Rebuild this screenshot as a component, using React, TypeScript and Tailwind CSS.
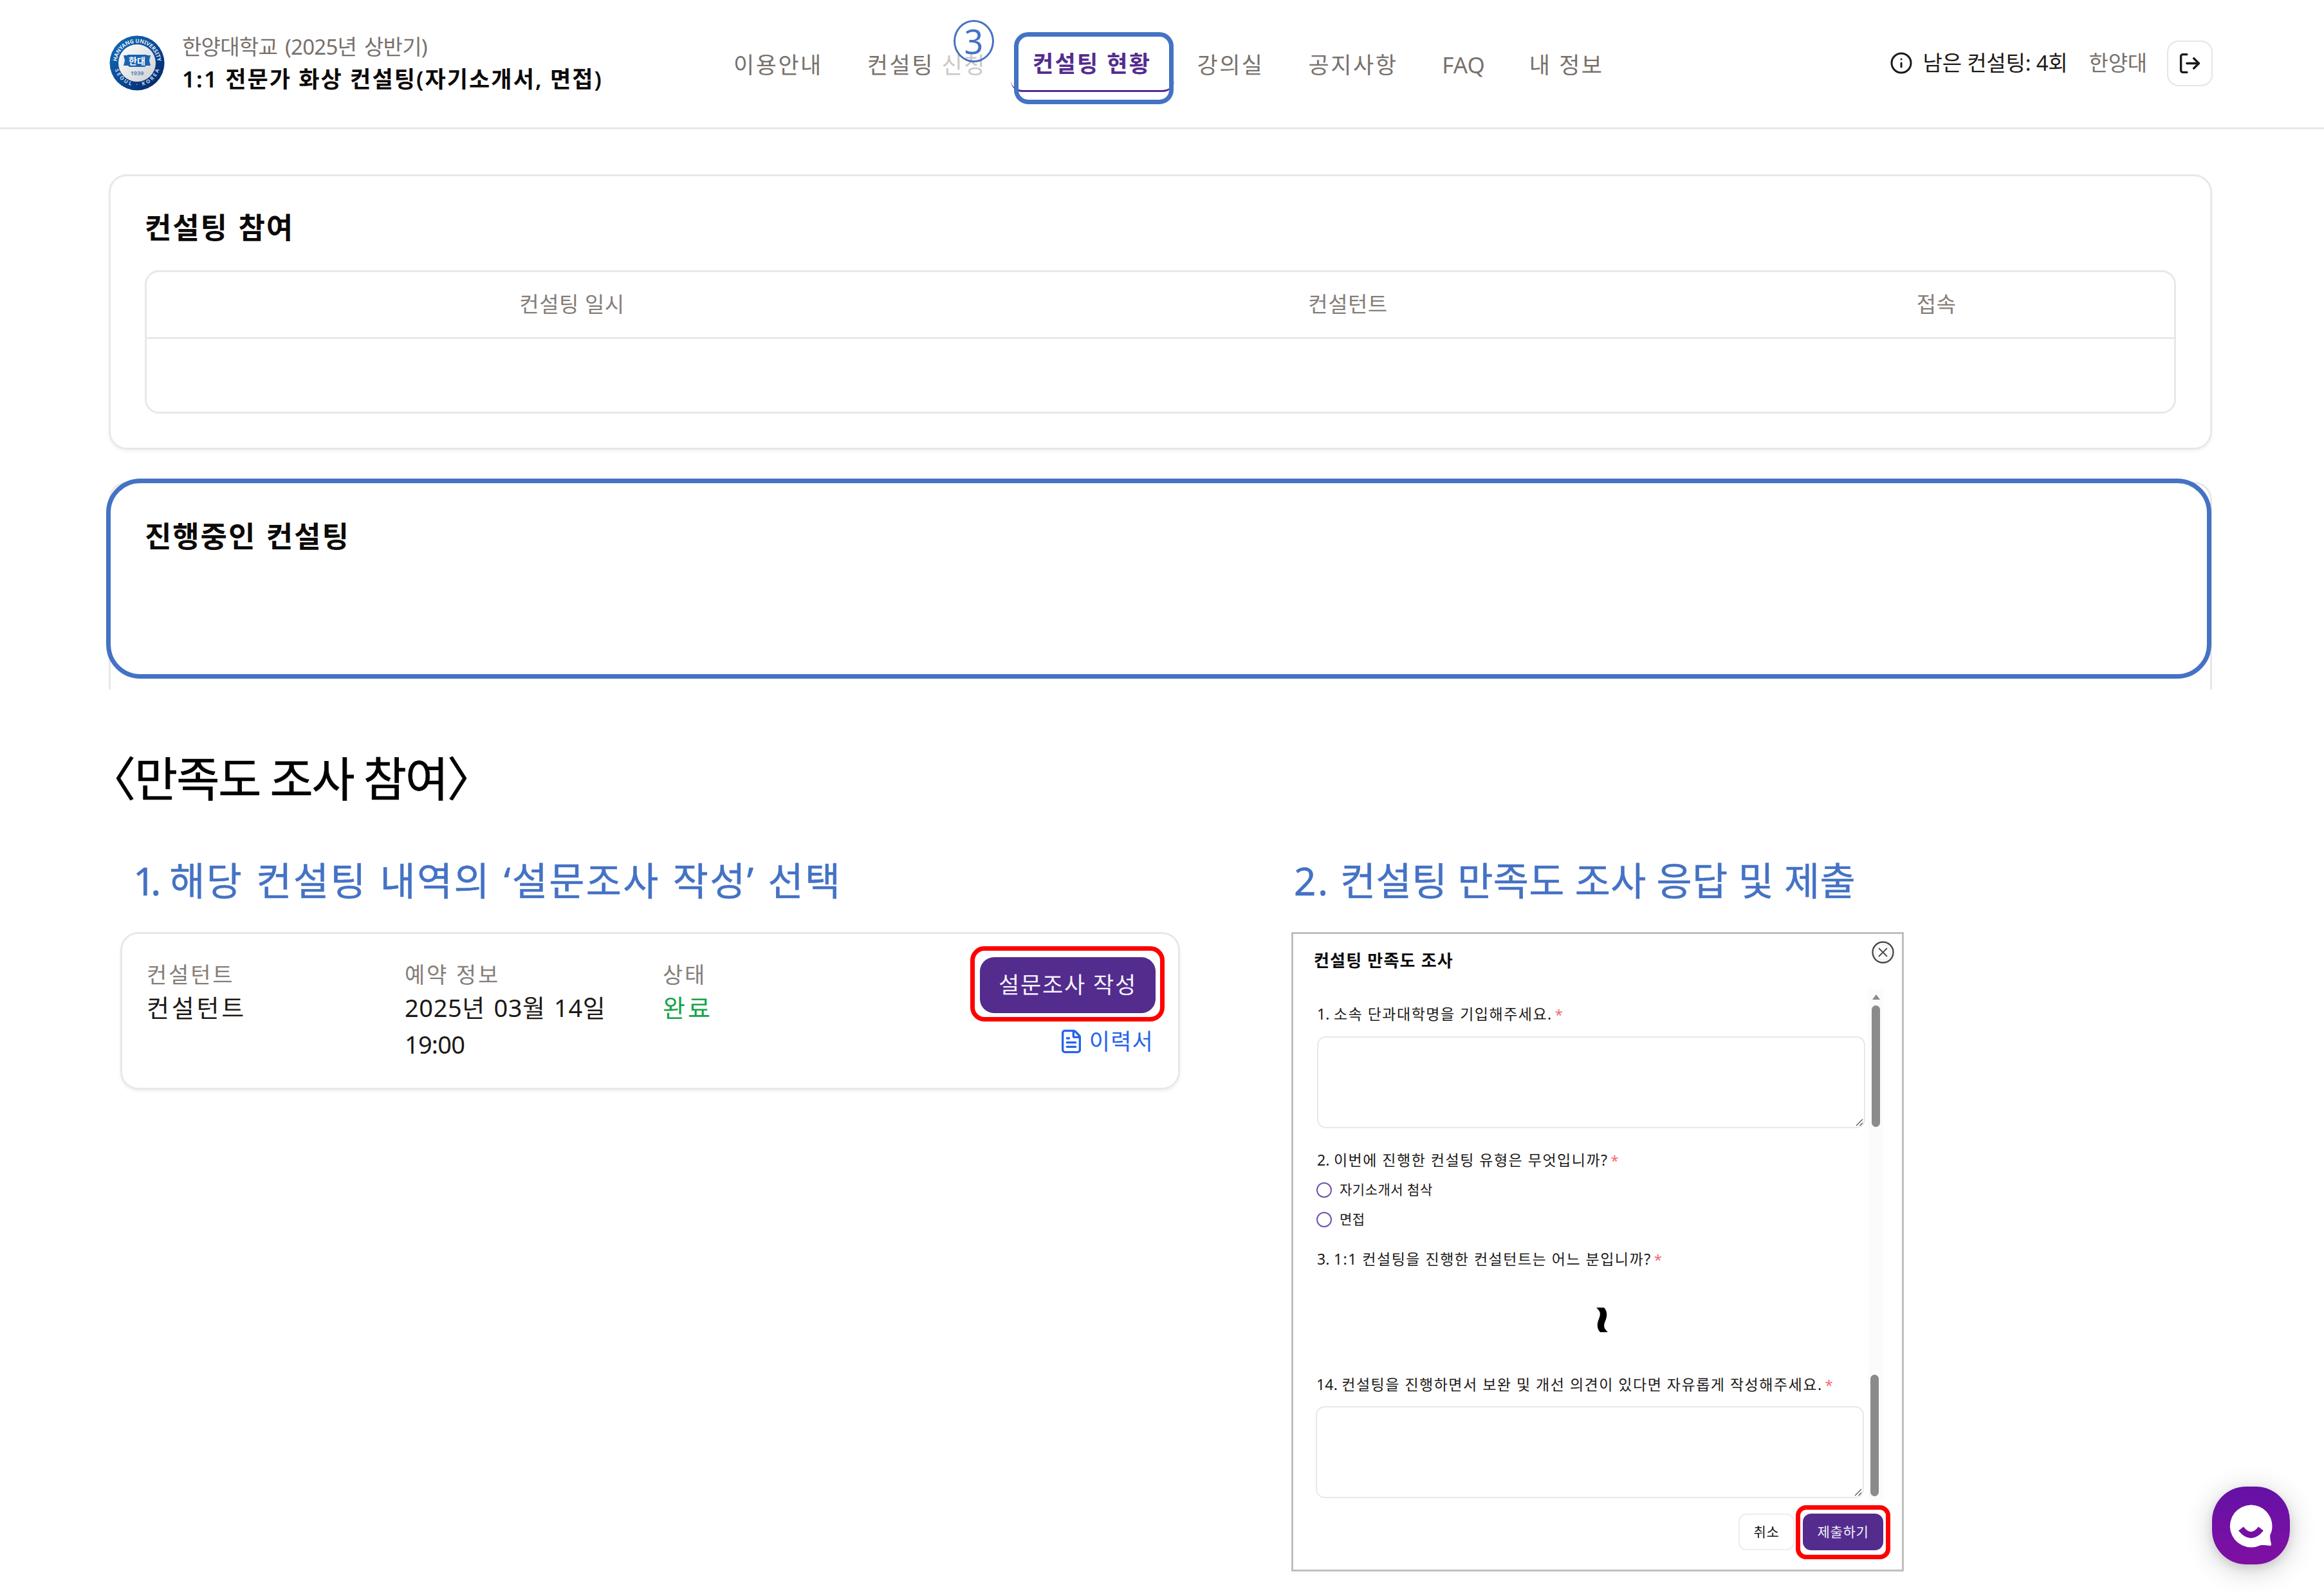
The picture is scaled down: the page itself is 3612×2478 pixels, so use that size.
import React from "react";
import { FileText, Info, LogOut } from "lucide-react";

function SchoolSeal() {
  return (
    <svg className="h-[86px] w-[86px] shrink-0" viewBox="0 0 86 86">
      <defs>
        <linearGradient id="ring" x1="0" y1="0" x2="1" y2="1">
          <stop offset="0" stopColor="#1470b8" />
          <stop offset="0.5" stopColor="#0a4a98" />
          <stop offset="1" stopColor="#04215e" />
        </linearGradient>
        <linearGradient id="face" x1="0" y1="0" x2="1" y2="1">
          <stop offset="0" stopColor="#ffffff" />
          <stop offset="1" stopColor="#cfd0d2" />
        </linearGradient>
        <path id="arcTop" d="M 11.5 43 A 31.5 31.5 0 0 1 74.5 43" />
        <path id="arcBottom" d="M 7 43 A 36 36 0 0 0 79 43" />
      </defs>
      <circle cx="43" cy="43" r="42.5" fill="url(#ring)" />
      <circle cx="43" cy="43" r="29" fill="url(#face)" />
      <text fontSize="8.5" fontWeight="700" fill="#e8eef6" fontFamily="Noto Sans" textAnchor="middle">
        <textPath href="#arcTop" startOffset="50%" textLength="94">HANYANG UNIVERSITY</textPath>
      </text>
      <text fontSize="8" fontWeight="700" fill="#c9d6ea" fontFamily="Noto Sans" textAnchor="middle">
        <textPath href="#arcBottom" startOffset="50%" textLength="92">SEOUL · KOREA</textPath>
      </text>
      <path d="M22 31h6v-1h30v1h6l-2 8 2 8h-7l-2 2H31l-2-2h-7l2-8z" fill="#1a63b0" />
      <text x="43" y="44.5" fontSize="14" fontWeight="700" fill="#ffffff" textAnchor="middle" fontFamily="Noto Sans CJK KR">
        한대
      </text>
      <text x="43" y="62" fontSize="9" fontWeight="700" fill="#5b86bd" textAnchor="middle" fontFamily="Noto Sans">
        1939
      </text>
    </svg>
  );
}

function Header() {
  return (
    <header className="flex h-[201px] border-b-[3px] border-[#e8e8e7] pl-[170px] pr-[173px]">
      <div className="flex w-[970px] items-center gap-[27px] pb-[2px]">
        <SchoolSeal />
        <div>
          <p className="text-[33px] leading-[50px] tracking-[-0.75px] text-[#78716c] [word-spacing:4px]">
            한양대학교 (2025년 상반기)
          </p>
          <p className="text-[35px] font-semibold leading-[50px] tracking-[2.1px] text-[#0c0a09]">
            1:1 전문가 화상 컨설팅(자기소개서, 면접)
          </p>
        </div>
      </div>
      <nav className="flex items-center gap-[69px] pt-[4px] text-[35px] tracking-[2.5px] text-[#78716c]">
        <span>이용안내</span>
        <span className="relative">
          컨설팅 <span className="text-[#cbc8c5]">신청</span>
          <span className="absolute -top-[44px] left-[134px] flex h-[66px] w-[63px] items-center justify-center rounded-[50%] border-[3px] border-[#4472c4] text-[52px] leading-none tracking-normal text-[#4472c4]">
            3
          </span>
        </span>
        <span className="relative -top-[2px] ml-[3px] font-semibold tracking-[2.4px] text-[#532c8e]">
          컨설팅 현황
          <span className="absolute -left-[34px] -top-[8px] h-[78px] w-[254px] rounded-[18px] border-b-[3px] border-[#532c8e]" />
          <span className="absolute -left-[29px] -top-[23px] h-[112px] w-[248px] rounded-[22px] border-[7px] border-[#4472c4]" />
        </span>
        <span className="ml-[2px]">강의실</span>
        <span>공지사항</span>
        <span className="tracking-normal">FAQ</span>
        <span>내 정보</span>
      </nav>
      <div className="ml-auto flex items-center pb-[2px] text-[33px] tracking-[-0.2px]">
        <Info className="h-[36px] w-[36px] text-[#1c1917]" strokeWidth={2} />
        <span className="ml-[15px] text-[#1c1917]">남은 컨설팅: 4회</span>
        <span className="ml-[33px] text-[#78716c]">한양대</span>
        <button className="ml-[31px] flex h-[71px] w-[71px] items-center justify-center rounded-[18px] border-2 border-[#e7e5e4]">
          <LogOut className="h-[37px] w-[37px] text-[#1c1917]" strokeWidth={2.2} />
        </button>
      </div>
    </header>
  );
}

function ResizeGrip() {
  return (
    <svg className="h-[12px] w-[12px]" viewBox="0 0 12 12" fill="none" stroke="#555" strokeWidth="1.2">
      <path d="M1 11 11 1M6.5 11 11 6.5" />
    </svg>
  );
}

function AnswerBox({ className }: { className: string }) {
  return (
    <div className={"flex w-[852px] items-end justify-end rounded-[14px] border-2 border-[#e9e8e7] p-[1px] " + className}>
      <ResizeGrip />
    </div>
  );
}

function Question({ no, text, className }: { no: string; text: string; className: string }) {
  return (
    <p className={"h-[30px] whitespace-nowrap text-[23px] leading-[26px] tracking-[1.5px] text-[#1c1917] " + className}>
      <span className="tracking-[0.2px]">{no}. </span>
      {text}
      <span className="ml-[4px] text-[22px] leading-none text-[#f4696b]">*</span>
    </p>
  );
}

function Option({ label, className }: { label: string; className: string }) {
  return (
    <div className={"flex h-[30px] items-center gap-[12px] text-[21px] tracking-[0.5px] text-[#1c1917] " + className}>
      <span className="h-[24px] w-[24px] rounded-full border-2 border-[#7453a9]" />
      <span>{label}</span>
    </div>
  );
}

function SurveyDialog() {
  return (
    <section className="h-[994px] w-[952px] border-[3px] border-[#bfbfbf]">
      <div className="flex h-[86px] justify-between pl-[32px] pr-[12px] pt-[11px]">
        <h4 className="mt-[12px] text-[26px] font-bold leading-[36px] tracking-[1.2px] text-[#0c0a09]">컨설팅 만족도 조사</h4>
        <svg className="h-[35px] w-[35px]" viewBox="0 0 35 35" fill="none">
          <circle cx="17.5" cy="17.5" r="16" stroke="#4a4a4a" strokeWidth="2.4" />
          <circle cx="17.5" cy="17.5" r="12" stroke="#e4e4e4" strokeWidth="1" />
          <path d="m11 11 13 13M24 11 11 24" stroke="#4a4a4a" strokeWidth="1.8" />
        </svg>
      </div>
      <div className="flex h-[795px] pl-[37px]">
        <div className="w-[857px] pt-[25px]">
          <Question className="" no="1" text="소속 단과대학명을 기입해주세요." />
          <AnswerBox className="mt-[18px] h-[143px]" />
          <Question className="mt-[36px]" no="2" text="이번에 진행한 컨설팅 유형은 무엇입니까?" />
          <Option className="-ml-[1px] mt-[15px]" label="자기소개서 첨삭" />
          <Option className="-ml-[1px] mt-[16px]" label="면접" />
          <Question className="mt-[33px]" no="3" text="1:1 컨설팅을 진행한 컨설턴트는 어느 분입니까?" />
          <div className="mt-[48px] flex h-[60px] items-center pl-[415px]">
            <span className="flex h-[60px] w-[60px] rotate-90 items-center justify-center text-[74px] font-bold leading-none text-black [-webkit-text-stroke:2.5px_black]">
              ~
            </span>
          </div>
          <Question className="-ml-[1px] mt-[57px]" no="14" text="컨설팅을 진행하면서 보완 및 개선 의견이 있다면 자유롭게 작성해주세요." />
          <AnswerBox className="-ml-[2px] mt-[17px] h-[143px]" />
        </div>
        <div className="flex w-[23px] flex-col items-center bg-[#fbfbfb] pt-[8px]">
          <svg className="h-[8px] w-[12px]" viewBox="0 0 12 8">
            <path d="M6 0 12 8H0z" fill="#8a8a8a" />
          </svg>
          <div className="mt-[9px] h-[189px] w-[13px] rounded-full bg-[#8b8b8b]" />
          <div className="mr-[4px] mt-[385px] h-[189px] w-[13px] rounded-full bg-[#8b8b8b]" />
        </div>
      </div>
      <div className="mt-[20px] flex justify-end gap-[13px] pr-[29px] text-[21px] tracking-[0.7px]">
        <button className="h-[57px] w-[87px] rounded-[12px] border-2 border-[#eeedec] text-[#1c1917]">취소</button>
        <button className="relative h-[57px] w-[125px] rounded-[13px] bg-[#532c8e] text-[#f5f3fa]">
          제출하기
          <span className="absolute -left-[11px] -top-[13px] h-[84px] w-[147px] rounded-[16px] border-[7px] border-[#ff0000]" />
        </button>
      </div>
    </section>
  );
}

function BookingCard() {
  return (
    <section className="flex h-[245px] w-[1647px] justify-between rounded-[28px] border-[3px] border-[#e8e8e7] pl-[38px] pr-[35px] shadow-[0_3px_5px_rgba(0,0,0,0.06)]">
      <div className="grid grid-cols-[401px_401px_300px] pt-[40px]">
        <div>
          <p className="text-[34px] leading-[46px] tracking-[2.8px] text-[#857e79]">컨설턴트</p>
          <p className="text-[38px] leading-[56px] tracking-[3.8px] text-[#1c1917]">컨설턴트</p>
        </div>
        <div>
          <p className="text-[34px] leading-[46px] tracking-[2.8px] text-[#857e79]">예약 정보</p>
          <p className="text-[38px] leading-[57px] tracking-[0.6px] text-[#1c1917] [word-spacing:3px]">
            2025년 03월 14일
            <br />
            <span className="tracking-[-0.8px]">19:00</span>
          </p>
        </div>
        <div>
          <p className="text-[34px] leading-[46px] tracking-[2.8px] text-[#857e79]">상태</p>
          <p className="text-[38px] leading-[56px] tracking-[4px] text-[#16a34a]">완료</p>
        </div>
      </div>
      <div className="flex flex-col items-end pt-[36px]">
        <button className="relative h-[87px] w-[273px] rounded-[22px] bg-[#532c8e] text-[35px] tracking-[1.8px] text-[#f5f3fa]">
          설문조사 작성
          <span className="absolute -left-[15px] -top-[17px] h-[117px] w-[302px] rounded-[22px] border-[7px] border-[#ff0000]" />
        </button>
        <a className="mr-[3px] mt-[19px] flex h-[50px] items-center text-[35px] tracking-[1.2px] text-[#2563eb]">
          <FileText className="mr-[8px] h-[40px] w-[40px]" strokeWidth={2} />
          이력서
        </a>
      </div>
    </section>
  );
}

function ChatLauncher() {
  return (
    <button className="absolute left-[3438px] top-[2311px] flex h-[121px] w-[121px] items-center justify-center rounded-[53px] bg-gradient-to-b from-[#6510a6] to-[#7f0fa2] shadow-[0_8px_44px_rgba(0,0,0,0.2),0_5px_14px_rgba(0,0,0,0.1)]">
      <svg className="h-[121px] w-[121px]" viewBox="0 0 121 121">
        <path
          d="M60.5 28.5a33 33 0 0 1 33 33c0 5-1 9.500-3.200 13.500-.4 5 .5 9 1.700 14.500.3 1.700-.6 2.700-2.300 2.500-6-.8-10-1.300-14.500-.8a33 33 0 1 1-14.700-62.700z"
          fill="#ffffff"
        />
        <path d="M45 65.500q15.500 19.500 31 0" fill="none" stroke="#760fa3" strokeWidth="10" />
      </svg>
    </button>
  );
}

export default function App() {
  return (
    <div className="relative h-[2478px] w-[3612px] overflow-hidden bg-white font-['Noto_Sans','Noto_Sans_CJK_KR',sans-serif]">
      <Header />
      <main className="pt-[70px]">
        <section className="ml-[169px] h-[428px] w-[3269px] rounded-[28px] border-[3px] border-[#e8e8e7] px-[53px] pt-[50px] shadow-[0_3px_5px_rgba(0,0,0,0.05)]">
          <h3 className="text-[45px] font-bold leading-[60px] tracking-[1.9px] text-[#0c0a09] [word-spacing:2px]">컨설팅 참여</h3>
          <div className="mt-[36px] rounded-[22px] border-[3px] border-[#e8e8e7]">
            <div className="grid h-[104px] grid-cols-[1322px_1090px_1fr] items-center border-b-[3px] border-[#e8e8e7] pb-[2px] text-center text-[33px] tracking-[0.5px] text-[#857e79]">
              <span>컨설팅 일시</span>
              <span>컨설턴트</span>
              <span>접속</span>
            </div>
            <div className="h-[113px]" />
          </div>
        </section>
        <section className="relative ml-[169px] mt-[50px] h-[323px] w-[3269px] rounded-t-[28px] border-x-[3px] border-t-[3px] border-[#e8e8e7] px-[53px] pt-[52px]">
          <h3 className="text-[45px] font-bold leading-[60px] tracking-[1.9px] text-[#0c0a09] [word-spacing:2px]">진행중인 컨설팅</h3>
          <div className="absolute -left-[7px] -top-[8px] h-[311px] w-[3272px] rounded-[53px] border-[7px] border-[#4472c4]" />
        </section>
        <h2 className="ml-[208px] mt-[94px] text-[73px] leading-[88px] tracking-[-2px] text-black [-webkit-text-stroke:0.7px_black] [word-spacing:-2px]">
          <span className="-ml-[70px]">〈</span>만족도 조사 참여<span>〉</span>
        </h2>
        <div className="mt-[75px] flex pl-[187px]">
          <div className="w-[1820px]">
            <h3 className="mb-[40px] whitespace-nowrap pl-[20px] text-[60px] leading-[80px] tracking-[2.3px] text-[#4472c4] [-webkit-text-stroke:0.5px_#4472c4] [word-spacing:2px]">
              <span className="tracking-[-7px]">1.</span> 해당 컨설팅 내역의 ‘설문조사 작성’ 선택
            </h3>
            <BookingCard />
          </div>
          <div>
            <h3 className="mb-[40px] whitespace-nowrap pl-[4px] text-[60px] leading-[80px] tracking-[0.3px] text-[#4472c4] [-webkit-text-stroke:0.5px_#4472c4]">
              <span className="tracking-[2.8px]">2.</span> 컨설팅 만족도 조사 응답 및 제출
            </h3>
            <SurveyDialog />
          </div>
        </div>
      </main>
      <ChatLauncher />
    </div>
  );
}
